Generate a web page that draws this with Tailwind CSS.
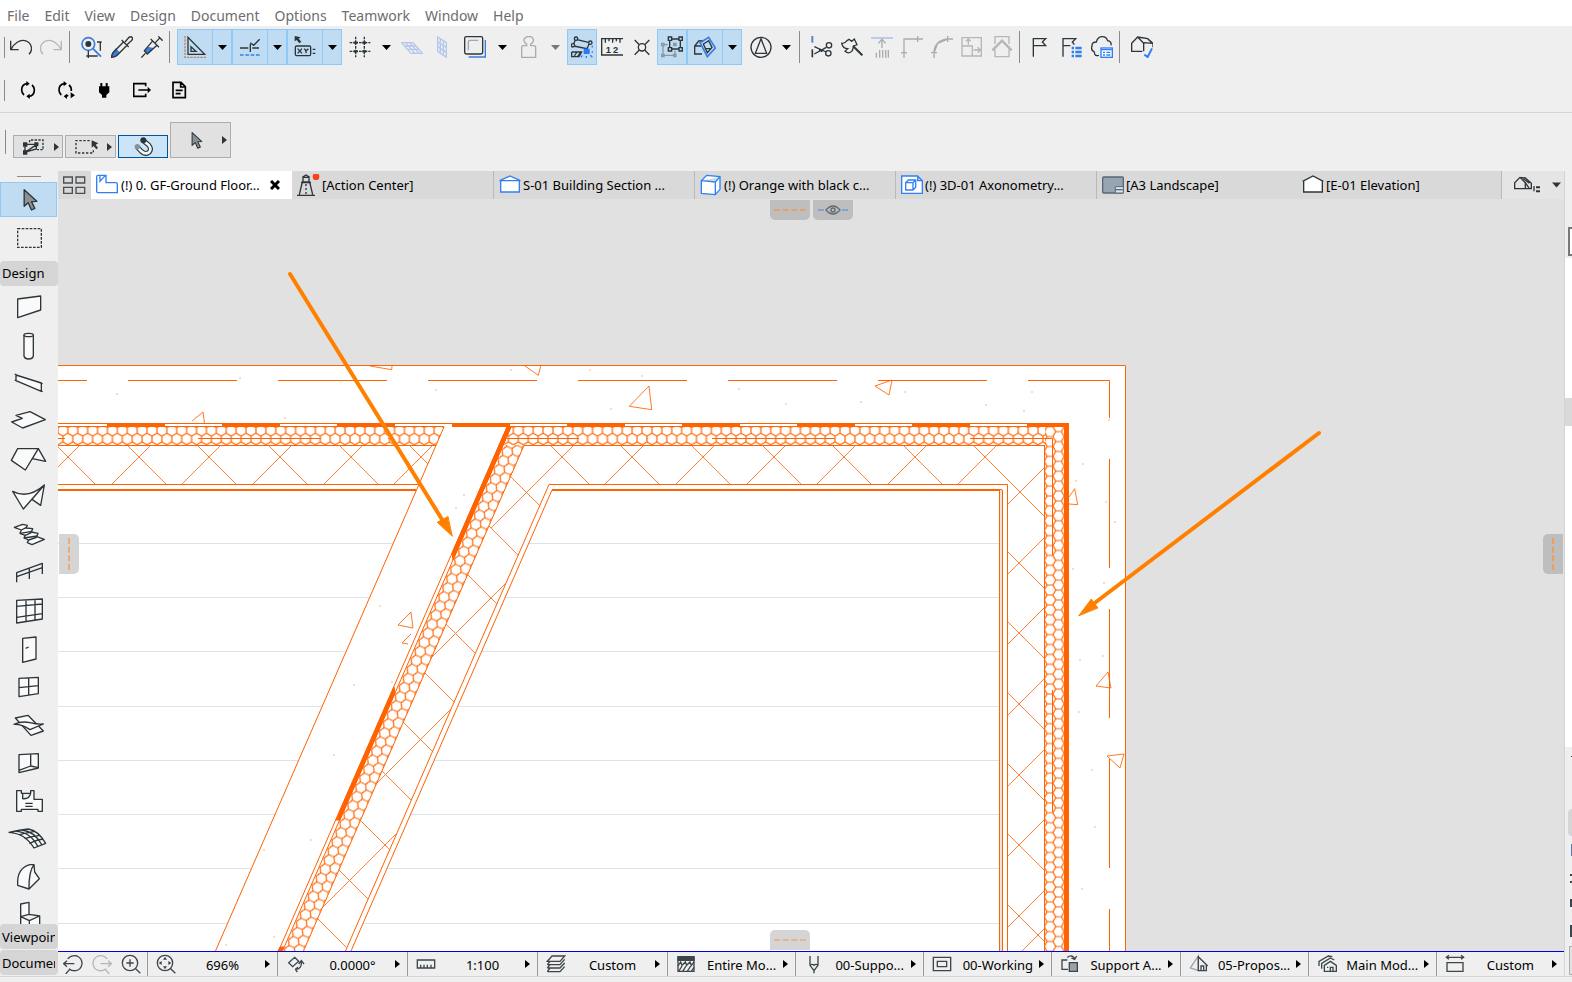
<!DOCTYPE html>
<html lang="en">
<head>
    <meta charset="UTF-8">
    <meta name="viewport" content="width=device-width, initial-scale=1.0">
    <title>GF-Ground Floor</title>
    <script src="https://cdn.jsdelivr.net/npm/@tailwindcss/browser@4"></script>
</head>
<body class="h-screen flex flex-col overflow-hidden bg-[#efefef] text-[13px] text-black font-['Noto_Sans','Open_Sans',sans-serif]">
    <!-- shared shapes -->
    <svg class="hidden">
        <symbol id="caret" viewBox="0 0 9 5"><path d="M0 0h9L4.5 5z" fill="currentColor"/></symbol>
        <symbol id="play" viewBox="0 0 5 8"><path d="M0 0l5 4-5 4z" fill="currentColor"/></symbol>
        <symbol id="pointer" viewBox="0 0 42 66"><path d="M2 2V52L14 41L24 63L34 58L24 38L40 37Z" fill="#8c9194" stroke="#2c3539" stroke-width="4" stroke-linejoin="round"/></symbol>
    </svg>

    <!-- menu bar -->
    <nav class="h-[26px] shrink-0 flex items-center gap-[15px] bg-white px-[7px] pt-[6px] text-sm text-[#6d6d6d]">
        <button>File</button>
        <button>Edit</button>
        <button>View</button>
        <button>Design</button>
        <button>Document</button>
        <button>Options</button>
        <button>Teamwork</button>
        <button>Window</button>
        <button>Help</button>
    </nav>

    <!-- standard toolbar -->
    <div class="h-[42px] shrink-0 flex items-center overflow-hidden [&_svg]:shrink-0 [&>button]:w-[30px] [&>button]:h-9 [&>button]:shrink-0 [&>button]:flex [&>button]:items-center [&>button]:justify-center">
        <span class="w-px h-[21px] ml-1 mr-px bg-[#8a8a8a] shrink-0"></span>
        <button aria-label="Undo"><svg class="size-[22px]" viewBox="0 0 66 66" fill="none" stroke="#2c3539" stroke-width="4"><path d="M2 14V41H26M3 40C12 22 30 10 45 14C66 20 70 42 57 55"/></svg></button>
        <button aria-label="Redo"><svg class="size-[22px]" viewBox="0 0 66 66" fill="none" stroke="#b4b6b7" stroke-width="4"><path d="M64 14V41H40M63 40C54 22 36 10 21 14C0 20-4 42 9 55"/></svg></button>
        <span class="w-px h-8 ml-[3px] mr-[7px] bg-[#8a8a8a] shrink-0"></span>
        <button aria-label="Find and select"><svg class="size-[22px]" viewBox="0 0 66 66" fill="none"><circle cx="22" cy="24" r="19" stroke="#3b7ddd" stroke-width="5"/><path d="M36 38L60 62" stroke="#3b7ddd" stroke-width="6"/><circle cx="22" cy="24" r="9" fill="#2c3539"/><path d="M22 44V66M16 60H50M48 18H62M58 18V44" stroke="#2c3539" stroke-width="4"/></svg></button>
        <button aria-label="Pick up parameters"><svg class="size-[22px]" viewBox="0 0 66 66" fill="none"><path d="M14 37L1 56V64H9L28 50Z" fill="#3b7ddd"/><path d="M38 17L6 50Q1 60 2 64Q10 64 17 59L48 28M32 12L53 33M42 18L54 4Q60 0 64 5Q66 10 61 14L48 26" stroke="#2c3539" stroke-width="4"/></svg></button>
        <button aria-label="Inject parameters"><svg class="size-[22px]" viewBox="0 0 66 66" fill="none"><path d="M20 32L10 46L18 54L30 46L38 36Z" fill="#3b7ddd"/><path d="M1 65L13 52M36 14L10 44L19 54L48 28M29 9L54 34M43 20L58 4M52 1L65 14" stroke="#2c3539" stroke-width="4"/></svg></button>
        <span class="w-px h-8 ml-[2px] mr-[7px] bg-[#8a8a8a] shrink-0"></span>

        <div class="flex shrink-0 h-9 *:border *:border-[#90c8f6] *:bg-[#c0dcf3] [&>button]:flex [&>button]:items-center [&>button]:justify-center">
            <button class="w-9" aria-label="Guide lines"><svg class="size-[22px]" viewBox="0 0 66 66" fill="none"><path d="M3 0V64H66" stroke="#c4825a" stroke-width="4" stroke-dasharray="7 3"/><path d="M12 4V55H62ZM21 32V46H36Z" stroke="#2c3539" stroke-width="4"/></svg></button>
            <button class="w-[19px] border-l-0!" aria-label="Guide line options"><svg class="w-[9px] h-[5px]"><use href="#caret"/></svg></button>
            <button class="w-9" aria-label="Snap guides"><svg class="size-[22px]" viewBox="0 0 66 66" fill="none"><path d="M3 36H28M34 24V48M40 36H60M34 20L44 28L62 10" stroke="#2c3539" stroke-width="4"/><path d="M3 57H62" stroke="#3b7ddd" stroke-width="5" stroke-dasharray="11 5"/></svg></button>
            <button class="w-[19px] border-l-0!" aria-label="Snap options"><svg class="w-[9px] h-[5px]"><use href="#caret"/></svg></button>
            <button class="w-9" aria-label="Coordinates"><svg class="size-[22px]" viewBox="0 0 66 66" fill="none" stroke="#2c3539" stroke-width="4"><path d="M2 0V16L8 12L16 22L22 17L14 8L20 4Z" fill="#2c3539" stroke="none"/><rect x="4" y="30" width="46" height="29" rx="4"/><path d="M11 38L24 52M24 38L11 52M31 38L36 45L43 38M36 45V52M56 40H64M56 52H64"/></svg></button>
            <button class="w-[19px] border-l-0!" aria-label="Coordinate options"><svg class="w-[9px] h-[5px]"><use href="#caret"/></svg></button>
        </div>
        <button class="ml-[3px]" aria-label="Grid"><svg class="size-[22px]" viewBox="0 0 66 66" fill="none" stroke="#2c3539" stroke-width="4"><path d="M20 2V64M46 2V64M2 20H64M2 46H64" stroke-dasharray="8 3 14 3"/><path d="M14 20H26M40 20H52M14 46H26M40 46H52" stroke-width="7"/></svg></button>
        <button class="w-[22px]!" aria-label="Grid options"><svg class="w-[9px] h-[5px]"><use href="#caret"/></svg></button>
        <button aria-label="Horizontal plane"><svg class="size-[22px]" viewBox="0 0 66 66" fill="none" stroke="#b3c7e8" stroke-width="4"><path d="M2 20H36L64 52H30ZM12 30H46M20 40H54M14 20L42 52M26 20L54 52"/></svg></button>
        <button aria-label="Vertical plane"><svg class="size-[22px]" viewBox="0 0 66 66" fill="none" stroke="#b3c7e8" stroke-width="4"><path d="M20 3L46 20V64L20 46ZM28 8V52M37 14V58M20 18L46 34M20 32L46 49"/></svg></button>
        <button class="ml-[3px]" aria-label="Floor"><svg class="size-[22px]" viewBox="0 0 66 66" fill="none"><path d="M14 63H64V12" stroke="#3b7ddd" stroke-width="4"/><rect x="2" y="2" width="54" height="52" rx="5" fill="#eee" stroke="#2c3539" stroke-width="4"/><path d="M13 43V18Q13 13 18 13H43" stroke="#a4a8aa" stroke-width="4"/></svg></button>
        <button class="w-[24px]!" aria-label="Floor options"><svg class="w-[9px] h-[5px]"><use href="#caret"/></svg></button>
        <button aria-label="Gravity"><svg class="size-[22px]" viewBox="0 0 66 66" fill="none" stroke="#a9acad" stroke-width="4"><path d="M11 64V34Q11 29 16 29H26V24Q16 18 18 10Q24 0 33 2Q42 0 46 10Q48 18 38 24V29H48Q53 29 53 34V64Z"/></svg></button>
        <button class="w-[23px]! text-[#777]" aria-label="Gravity options"><svg class="w-[9px] h-[5px]"><use href="#caret"/></svg></button>
        <button class="border border-[#90c8f6] bg-[#c0dcf3]" aria-label="Ruler snap"><svg class="size-[22px]" viewBox="0 0 66 66" fill="none" stroke="#2c3539" stroke-width="4"><path d="M6 28L14 10L56 20L48 38L8 30"/><circle cx="15" cy="8" r="5" fill="#c0dcf3"/><circle cx="6" cy="28" r="5" fill="#c0dcf3"/><circle cx="58" cy="20" r="5" fill="#c0dcf3"/><path d="M2 48H32L24 62H2V48M10 60L18 48M20 62L28 50"/><rect x="38" y="38" width="18" height="16" fill="#2979ff" stroke="none"/><path d="M62 34L66 30M62 48H66M58 58L64 64M46 60V66M34 58L30 64" stroke="#2979ff"/></svg></button>
        <button aria-label="Dimensions"><svg class="size-[22px]" viewBox="0 0 66 66" fill="none" stroke="#2c3539" stroke-width="4"><path d="M66 8H2V57H66M13 8V20M24 8V16M35 8V20M46 8V16M57 8V20"/><text x="14" y="51" fill="#2c3539" stroke="none" font-family="Liberation Sans" font-size="28" font-weight="bold">1</text><text x="36" y="51" fill="#2c3539" stroke="none" font-family="Liberation Sans" font-size="28" font-weight="bold">2</text></svg></button>
        <button aria-label="Snap points"><svg class="size-[22px]" viewBox="0 0 66 66" fill="none" stroke="#2c3539" stroke-width="4"><circle cx="33" cy="34" r="11"/><path d="M11 12L25 26M55 12L41 26M11 56L25 42M55 56L41 42"/></svg></button>
        <button class="border border-[#90c8f6] bg-[#c0dcf3]" aria-label="Group"><svg class="size-[22px]" viewBox="0 0 66 66" fill="none" stroke="#8998a3" stroke-width="4"><path d="M6 26H20M6 26V58H42V44M36 26H46"/><path d="M2 22h7v7H2zM2 55h7v7H2zM38 55h7v7h-7zM38 22h7v7h-7z"/><g stroke="#2c3539"><path d="M27 9H57M27 39H57M26 10V38M58 10V38"/><path d="M22 3h10v10H22zM54 3h10v10H54zM22 35h10v10H22zM54 35h10v10H54z" fill="#c0dcf3"/></g></svg></button>
        <button class="w-9! border border-[#90c8f6] bg-[#c0dcf3]" aria-label="Trace"><svg class="size-[22px]" viewBox="0 0 66 66" fill="none"><path d="M24 54H2V30L14 15L30 14M2 30H22" stroke="#2c3539" stroke-width="4"/><path d="M18 20L44 4L64 36L40 62Z" stroke="#3b7ddd" stroke-width="5"/><path d="M28 24L44 14L54 34L40 50ZM32 38H50" stroke="#2c3539" stroke-width="4"/></svg></button>
        <button class="w-[19px]! border border-l-0 border-[#90c8f6] bg-[#c0dcf3]" aria-label="Trace options"><svg class="w-[9px] h-[5px]"><use href="#caret"/></svg></button>
        <button class="ml-[4px]" aria-label="North"><svg class="size-[22px]" viewBox="0 0 66 66" fill="none" stroke="#2c3539" stroke-width="4"><circle cx="33" cy="34" r="30"/><path d="M33 8L16 52H50Z"/></svg></button>
        <button class="w-[21px]!" aria-label="North options"><svg class="w-[9px] h-[5px]"><use href="#caret"/></svg></button>
        <span class="w-px h-8 ml-[2px] mr-[7px] bg-[#8a8a8a] shrink-0"></span>

        <button aria-label="Split"><svg class="size-[22px]" viewBox="0 0 66 66" fill="none" stroke="#2c3539" stroke-width="4"><path d="M4 0V20" stroke="#5b86cf" stroke-width="6"/><path d="M4 40V64" stroke-width="5"/><path d="M10 32L46 48M10 54L46 34M24 40L34 47"/><circle cx="54" cy="28" r="8"/><circle cx="52" cy="52" r="8"/></svg></button>
        <button aria-label="Adjust"><svg class="size-[22px]" viewBox="0 0 66 66" fill="none" stroke="#2c3539" stroke-width="4"><path d="M18 14L24 10L32 16L40 9L48 26L38 30L34 44Q24 56 12 46L20 38Q6 38 2 22Q10 24 18 14Z"/><path d="M36 30L64 58" stroke-width="6"/></svg></button>
        <button aria-label="Trim"><svg class="size-[22px]" viewBox="0 0 66 66" fill="none" stroke="#a9acad" stroke-width="4"><path d="M0 6H66" stroke="#b0c4e6" stroke-width="5"/><path d="M33 36V12M22 22L33 10L44 22M16 50V65M26 42V65M35 42V65M44 42V65M52 42V65"/></svg></button>
        <button aria-label="Intersect"><svg class="size-[22px]" viewBox="0 0 66 66" fill="none" stroke="#a9acad" stroke-width="4"><path d="M0 50H18M9 66V9H66M50 0V18"/></svg></button>
        <button aria-label="Fillet"><svg class="size-[22px]" viewBox="0 0 66 66" fill="none" stroke="#a9acad" stroke-width="4"><path d="M0 50H18M9 66V50Q10 14 50 9H66M50 0V18M10 48L20 22L48 10"/></svg></button>
        <button aria-label="Resize"><svg class="size-[22px]" viewBox="0 0 66 66" fill="none" stroke="#b4b6b7" stroke-width="4"><path d="M3 5H61V60H3ZM3 30H34V60M22 26V8M15 16L22 9L29 16M38 42H58M50 34L58 42L50 50"/></svg></button>
        <button aria-label="Home story"><svg class="size-[22px]" viewBox="0 0 66 66" fill="none" stroke="#b4b6b7" stroke-width="4"><path d="M12 24V2H54V24M12 40V62H54V40"/><path d="M4 43L33 14L62 43" stroke-width="7"/></svg></button>
        <span class="w-px h-8 ml-[2px] mr-[7px] bg-[#8a8a8a] shrink-0"></span>
        <button aria-label="Flag"><svg class="size-[22px]" viewBox="0 0 66 66" fill="none" stroke="#2c3539" stroke-width="4"><path d="M7 62V8H44L34 18L44 29H8"/></svg></button>
        <button aria-label="Flag list"><svg class="size-[22px]" viewBox="0 0 66 66" fill="none" stroke="#2c3539" stroke-width="4"><path d="M6 62V8H44L34 18L40 26M6 29H28"/><path d="M32 36H39M43 36H62M32 48H39M43 48H62M32 60H39M43 60H62" stroke="#2f80f5" stroke-width="8"/></svg></button>
        <button aria-label="Cloud issues"><svg class="size-[22px]" viewBox="0 0 66 66" fill="none" stroke="#2c3539" stroke-width="4"><path d="M24 58Q10 62 10 48Q-2 42 3 30Q2 18 16 18Q20 2 34 2Q46 2 50 14Q62 16 60 28"/><rect x="30" y="36" width="34" height="28" fill="#fff" stroke="#2f80f5"/><path d="M30 41H64M36 49H42M46 49H58M36 57H42M46 57H58" stroke="#2f80f5"/></svg></button>
        <span class="w-px h-8 ml-[2px] mr-[7px] bg-[#8a8a8a] shrink-0"></span>
        <button aria-label="Check model"><svg class="size-[22px]" viewBox="0 0 66 66" fill="none" stroke="#2c3539" stroke-width="4"><path d="M34 46H2V22L20 3L38 22V46M20 3L50 8L66 22L38 20M66 22V34M50 8L64 22"/><path d="M40 56L50 63L63 37" stroke="#2f80f5" stroke-width="6"/></svg></button>
    </div>

    <!-- connections toolbar -->
    <div class="h-[45px] shrink-0 flex items-center border-b border-[#d4d4d4] [&>button]:w-[38px] [&>button]:h-8 [&>button]:flex [&>button]:items-center [&>button]:justify-center">
        <span class="w-px h-[21px] ml-1 mr-1 bg-[#8a8a8a]"></span>
        <button aria-label="Sync"><svg class="size-[18px]" viewBox="0 0 54 54" fill="none" stroke="#000" stroke-width="5"><path d="M24 8Q8 10 8 27Q8 36 15 42M30 46Q46 44 46 27Q46 18 39 12"/><path d="M22 0L32 8L22 16ZM32 38L22 46L32 54Z" fill="#000" stroke="none"/></svg></button>
        <button aria-label="Sync and play"><svg class="size-[18px]" viewBox="0 0 54 54" fill="none" stroke="#000" stroke-width="5"><path d="M22 8Q6 10 6 27Q6 36 13 42M28 46L34 43M43 30Q44 18 36 12"/><path d="M20 0L30 8L20 16ZM30 38L20 46L30 54ZM41 34L54 43L41 52Z" fill="#000" stroke="none"/></svg></button>
        <button aria-label="Plug"><svg class="size-[18px]" viewBox="0 0 54 54"><path d="M16 6H22V16H32V6H38V16H43V34L34 42V50H21V42L12 34V16H16Z"/></svg></button>
        <button aria-label="Export"><svg class="size-[18px]" viewBox="0 0 54 54" fill="none" stroke="#000" stroke-width="5"><path d="M38 16V8H2V46H38V38M16 27H48"/><path d="M44 17L54 27L44 37Z" fill="#000" stroke="none"/></svg></button>
        <button aria-label="Report"><svg class="size-[18px]" viewBox="0 0 54 54" fill="none" stroke="#000" stroke-width="5"><path d="M6 4H30L43 17V50H6ZM29 4V18H43M14 28H35M14 38H29"/></svg></button>
    </div>

    <!-- info box -->
    <div class="h-[58px] shrink-0 flex items-end gap-[2px] pb-[13px] [&>button]:flex [&>button]:items-center [&>button]:justify-between [&>button]:border [&>button]:border-[#adadad] [&>button]:bg-[#e1e1e1] [&>button]:pr-[3px] text-[#333]">
        <span class="w-px h-6 ml-[5px] mr-[5px] mb-1 bg-[#8a8a8a]"></span>
        <button class="w-[50px] h-[23px] pl-[9px]" aria-label="Selection method"><svg class="w-[21px] h-4" viewBox="0 0 63 48" fill="none" stroke="#2c3539" stroke-width="4"><path d="M20 10V3H60V32H42" stroke-dasharray="7 4"/><path d="M6 40V16H42L6 40M12 38L40 30V18"/><path d="M2 12h9v9H2zM2 36h9v9H2zM36 12h8v8h-8z" fill="#2c3539"/></svg><svg class="w-[5px] h-2"><use href="#play"/></svg></button>
        <button class="w-[51px] h-[23px] pl-[9px]" aria-label="Marquee method"><svg class="w-6 h-4" viewBox="0 0 72 48" fill="none" stroke="#2c3539" stroke-width="4"><path d="M44 5H3V42H55V34" stroke-dasharray="7 5"/><path d="M50 4V26L56 21L64 31L69 27L62 17L70 13Z" fill="#2c3539" stroke="none"/></svg><svg class="w-[5px] h-2"><use href="#play"/></svg></button>
        <button class="w-[50px] h-[23px] justify-center! pl-[3px] border-[#005499]! bg-[#cce4f7]!" aria-label="Magnet"><svg class="size-[19px]" viewBox="0 0 57 57" fill="none" stroke="#2c3539"><path d="M28 11L44 24Q54 36 45 46Q34 54 22 43L9 29" stroke-width="15"/><path d="M28 11L44 24Q54 36 45 46Q34 54 22 43L9 29" stroke="#eef5fb" stroke-width="8"/><circle cx="10" cy="29" r="8" fill="#8c9194" stroke="none"/><circle cx="28" cy="10" r="9" fill="#2c3539" stroke="none"/></svg></button>
        <button class="w-[61px] h-9 pl-5" aria-label="Arrow tool"><svg class="w-3 h-[17px]"><use href="#pointer"/></svg><svg class="w-[5px] h-2"><use href="#play"/></svg></button>
    </div>

    <div class="flex-1 min-h-0 flex">
        <!-- tool palette -->
        <aside class="w-[58px] shrink-0 flex flex-col overflow-hidden">
            <span class="w-6 h-px mt-[5px] mb-[5px] ml-[17px] bg-[#8a8a8a] shrink-0"></span>
            <button class="w-[57px] h-[35px] shrink-0 flex items-center justify-center pl-1 border border-[#90c8f6] bg-[#c0dcf3]" aria-label="Arrow"><svg class="w-[15px] h-[22px]"><use href="#pointer"/></svg></button>
            <button class="h-[42px] mb-[2px] shrink-0 flex items-center justify-center" aria-label="Marquee"><svg class="w-[25px] h-5" viewBox="0 0 75 60" fill="none" stroke="#2c3539" stroke-width="4"><path d="M2 2H73V58H2Z" stroke-dasharray="8 4"/></svg></button>
            <button class="h-[25px] mb-[2px] shrink-0 rounded-sm bg-[#d5d5d5] pl-[2px] pt-px text-left">Design</button>
            <div class="flex-1 min-h-0 overflow-hidden flex flex-col [&>button]:shrink-0 [&_svg]:size-[38px] [&_svg]:ml-[10px] [&_svg]:overflow-visible [&_svg]:fill-[#fafafa] [&_svg]:stroke-[#2c3539] [&_svg]:stroke-[4] [&_svg]:[stroke-linejoin:round]">
                <button aria-label="Wall"><svg viewBox="0 0 114 114"><path d="M23 33L92 24V66L23 89Z"/></svg></button>
                <button aria-label="Column"><svg viewBox="0 0 114 114"><path d="M42 27V90Q44 99 56 99Q68 99 70 90V27"/><ellipse cx="56" cy="27" rx="14" ry="5"/></svg></button>
                <button aria-label="Beam"><svg viewBox="0 0 114 114"><path d="M18 33L94 57V82L18 50ZM14 30L24 35M14 48L24 53M88 56L98 59M88 79L98 83"/></svg></button>
                <button aria-label="Slab"><svg viewBox="0 0 114 114"><path d="M5 60L37 49L18 40L60 29L106 53L38 78Z"/></svg></button>
                <button aria-label="Roof"><svg viewBox="0 0 114 114"><path d="M85 26L107 64L67 56ZM23 26H85L46 90L4 61Z"/></svg></button>
                <button aria-label="Shell"><svg viewBox="0 0 114 114"><path d="M103 21L92 82L66 64ZM8 40Q55 64 103 21L40 93Z"/></svg></button>
                <button aria-label="Stair"><svg viewBox="0 0 114 114"><path d="M13 34L38 25L52 28L48 36L68 38L64 48L84 52L80 62L103 70L66 86L52 80L56 72L42 66L46 58L30 52L34 42Z"/><path d="M34 42L50 34M30 52L66 46M46 58L64 50M42 66L82 60M56 72L80 64" class="fill-none"/></svg></button>
                <button aria-label="Railing"><svg viewBox="0 0 114 114"><path d="M20 85V56L97 28V60M20 68L97 41M58 42V75" class="fill-none"/></svg></button>
                <button aria-label="Curtain wall"><svg viewBox="0 0 114 114"><path d="M20 25L97 21V81L20 93ZM48 24V88M75 23V84M20 43L97 36M20 76L97 65"/></svg></button>
                <button aria-label="Door"><svg viewBox="0 0 114 114"><path d="M38 25L78 21V87L38 97ZM47 55L56 51"/></svg></button>
                <button aria-label="Window"><svg viewBox="0 0 114 114"><path d="M27 31L85 28V77L27 86ZM27 59L85 53M56 29V82"/></svg></button>
                <button aria-label="Skylight"><svg viewBox="0 0 114 114"><path d="M16 36L54 28L100 75L63 88Z"/><path d="M12 55Q36 44 60 50T100 54L60 71Q36 54 12 55Z"/></svg></button>
                <button aria-label="Opening"><svg viewBox="0 0 114 114"><path d="M27 32L85 29V72L27 86ZM62 31V66L27 79M62 66L85 71"/></svg></button>
                <button aria-label="Zone"><svg viewBox="0 0 114 114"><path d="M20 26H34V34H62V26H72V52H97V88H84V82H34V88H20ZM38 34V50Q58 52 62 34M46 64H68M46 73H68"/></svg></button>
                <button aria-label="Mesh"><svg viewBox="0 0 114 114"><path d="M-3 37Q30 30 55 27Q85 32 107 70L72 84Q46 40-3 37Z"/><path d="M16 34Q60 34 84 80M36 30Q74 34 96 75M28 44Q52 38 74 34M44 56Q66 48 90 46M58 70Q80 60 99 57" class="fill-none"/></svg></button>
                <button aria-label="Morph"><svg viewBox="0 0 114 114"><path d="M23 82Q20 30 60 20H72L74 42L88 62L57 93ZM72 20Q56 40 57 93"/></svg></button>
                <button aria-label="Object"><svg viewBox="0 0 114 114"><path d="M32 90V24L57 19V55L89 60V90M32 62L57 55M32 62L58 74L89 60M58 74V90"/></svg></button>
            </div>
            <button class="h-[25px] mb-px shrink-0 overflow-hidden rounded-sm bg-[#d5d5d5] pl-[2px] pr-[3px] pt-[2px] text-left"><span class="block overflow-hidden">Viewpoint</span></button>
            <button class="h-[25px] mb-px shrink-0 overflow-hidden rounded-sm bg-[#d5d5d5] pl-[2px] pr-[3px] pt-[2px] text-left"><span class="block overflow-hidden">Document</span></button>
        </aside>

        <main class="flex-1 min-w-0 flex flex-col">
            <!-- view tabs -->
            <div role="tablist" class="h-7 shrink-0 flex bg-[#d9d9d9] [&_svg]:shrink-0 [&>div]:w-[201px] [&>div]:min-w-0 [&>div]:flex [&>div]:items-center [&>div]:pl-[5px] [&>div]:gap-[2px] [&>div]:border-l [&>div]:border-[#b9b9b9] [&_button]:whitespace-nowrap [&_[role=tab]]:pt-[2px]">
                <button class="w-[33px] shrink-0 flex items-center justify-center" aria-label="Tab overview"><svg class="w-[23px] h-[19px]" viewBox="0 0 69 57" fill="none" stroke="#4a4f52" stroke-width="4"><path d="M2 3H28V21H2ZM39 3H65V21H39ZM2 34H28V52H2ZM39 34H65V52H39Z"/></svg></button>
                <div class="bg-white border-l-0! gap-[3px]!">
                    <svg class="size-[22px]" viewBox="0 0 66 66" fill="#fff" stroke="#2f80f5" stroke-width="4"><path d="M2 8Q2 4 6 4H30V26H60Q64 26 64 30V56H6Q2 56 2 52ZM12 4V22L28 4"/></svg>
                    <button role="tab" aria-selected="true">(!) 0. GF-Ground Floor...</button>
                    <button class="pl-[7px]" aria-label="Close tab"><svg class="size-[10px]" viewBox="0 0 10 10" stroke="#000" stroke-width="3"><path d="M1 1L9 9M9 1L1 9"/></svg></button>
                </div>
                <div class="border-l-0!">
                    <svg class="w-[23px] h-[22px]" viewBox="0 0 69 66" fill="none" stroke="#2c3539" stroke-width="4"><path d="M0 64H54M7 62L16 24H38L47 62M18 24V10H36V24M12 26H42M16 10L27 3L38 10M27 30V36M27 42V48M27 54V60"/><circle cx="57" cy="8" r="10" fill="#fa3f1a" stroke="none"/></svg>
                    <button role="tab">[Action Center]</button>
                </div>
                <div>
                    <svg class="size-[22px]" viewBox="0 0 66 66" fill="#fff" stroke="#2f80f5" stroke-width="4"><path d="M5 20V54H61V20M2 20L33 6L64 20Z"/></svg>
                    <button role="tab">S-01 Building Section ...</button>
                </div>
                <div>
                    <svg class="size-[22px]" viewBox="0 0 66 66" fill="#fff" stroke="#2f80f5" stroke-width="4"><path d="M4 20L20 4L60 8V46L46 62L4 58ZM4 20L46 24L60 8M46 24V62"/></svg>
                    <button role="tab">(!) Orange with black c...</button>
                </div>
                <div>
                    <svg class="size-[22px]" viewBox="0 0 66 66" fill="#fff" stroke="#2f80f5" stroke-width="4"><path d="M2 6H50L64 20V58H2ZM50 6V20H64"/><path d="M14 26L22 18H44V40L36 48H14ZM14 26H36L44 18M36 26V48"/></svg>
                    <button role="tab">(!) 3D-01 Axonometry...</button>
                </div>
                <div>
                    <svg class="size-[22px]" viewBox="0 0 66 66" fill="#97a5b3" stroke="#56687a" stroke-width="4"><rect x="2" y="9" width="62" height="48" rx="3"/><path d="M40 38H64V57H40Z" fill="#dfe5ec" stroke-width="3"/><path d="M42 47H62"/></svg>
                    <button role="tab">[A3 Landscape]</button>
                </div>
                <div class="border-l-0! flex-1">
                    <svg class="size-[22px]" viewBox="0 0 66 66" fill="#fff" stroke="#2c3539" stroke-width="4"><path d="M5 22V54H61V22M2 22L33 6L64 22"/></svg>
                    <button role="tab">[E-01 Elevation]</button>
                </div>
                <button class="w-[63px] shrink-0 flex items-center gap-3 border-l border-[#b9b9b9] bg-[#e5e5e5] pl-3 text-[#333]" aria-label="View settings"><svg class="w-[26px] h-[18px]" viewBox="0 0 78 54" fill="none" stroke="#2c3539" stroke-width="4"><path d="M2 38V20L18 4L34 20V38ZM18 4L34 6L52 22V38H34M28 8L46 22M34 20L46 38M60 30V46"/><path d="M66 34H78M66 46H78" stroke-width="6"/></svg><svg class="w-[9px] h-[6px]"><use href="#caret"/></svg></button>
            </div>

            <!-- drawing area -->
            <div class="relative flex-1 min-h-0 bg-[#e1e1e1] overflow-hidden">
                <svg class="absolute inset-0 w-full h-full" viewBox="58 199 1506 752" preserveAspectRatio="xMinYMin slice" fill="none" stroke="#ff6200">
                    <defs>
                        <!-- honeycomb insulation, one pattern per wall direction -->
                        <pattern id="combTop" x="944" y="427.6" width="9.9" height="17.1" patternUnits="userSpaceOnUse"><path d="M4.95 0V5.7L0 8.55V14.25L4.95 17.1L9.9 14.25V8.55L4.95 5.7" stroke="#ff6200" stroke-width="1.2" fill="none"/></pattern>
                        <pattern id="combSide" x="1044.3" y="426.7" width="17.1" height="9.9" patternUnits="userSpaceOnUse"><path d="M0 4.95L2.85 0H8.55L11.4 4.95L8.55 9.9H2.85ZM11.4 4.95H17.1" stroke="#ff6200" stroke-width="1.2" fill="none"/></pattern>
                        <pattern id="combSlant" width="17.1" height="9.9" patternUnits="userSpaceOnUse" patternTransform="translate(512 427) rotate(23.55)"><path d="M0 4.95L2.85 0H8.55L11.4 4.95L8.55 9.9H2.85ZM11.4 4.95H17.1" stroke="#ff6200" stroke-width="1.2" fill="none"/></pattern>
                        <clipPath id="leftWall"><path d="M58 427H444L419 484H58Z"/></clipPath>
                        <clipPath id="slantStud"><path d="M524 445H566L549 484L345 951H303Z"/></clipPath>
                        <clipPath id="floor"><path d="M58 490H416L215 951H58ZM552 490H999V951H351Z"/></clipPath>
                    </defs>
                    <path d="M58 365H1126V951H58Z" fill="#fff" stroke="none"/>
                    <path d="M58 365.5H1125.5V951"/>
                    <path d="M58 543.5H999M58 597.5H999M58 651.5H999M58 706.5H999M58 760.5H999M58 814.5H999M58 868.5H999M58 923.5H999" stroke="#dde2ef" clip-path="url(#floor)"/>

                    <!-- concrete layer -->
                    <path d="M58 380.5H87M128 380.5H237M278 380.5H387M428 380.5H537M578 380.5H687M728 380.5H837M878 380.5H987M1028 380.5H1109.5V418M1109.5 459V568M1109.5 609V718M1109.5 759V868M1109.5 909V951"/>
                    <path opacity=".85" d="M370 366L391.7 369.7L392 366M525 366L538.3 375.3L540.7 366M629.3 406.3L649 386L651.7 409.7ZM875 386L892 380L889 395ZM192 421L203 412L204.5 423M1069 497L1074.7 488.7L1077.7 504.7L1069 504M1096 686L1108 672L1111 688ZM1107 756L1124 754L1120 768ZM398 625L411 612L413 628ZM411 634L402 643L408 644"/>
                    <path stroke-width="1.5" stroke-linecap="round" opacity=".6" d="M117 394h0M240 378h0M285 418h0M511 370h0M590 370h0M642 376h0M436 390h0M611 409h0M739 389h0M786 404h0M861 402h0M905 392h0M986 405h0M1032 392h0M1024 411h0M1109 420h0M1083 464h0M1076 481h0M1106 502h0M1115 522h0M1073 569h0M1104 583h0M1080 660h0M1103 656h0M1079 712h0M1092 770h0M1095 827h0M464 495h0M456 508h0M354 685h0M392 682h0M380 606h0M334 755h0M264 850h0M311 840h0M312 884h0M274 937h0M226 945h0M1082 889h0"/>

                    <!-- membrane -->
                    <path d="M58 423.5H1069M58 426.5H444M510 426.5H1064"/>
                    <path stroke-width="4" d="M107 425H165M222 425H280M337 425H395M452 425H510M567 425H625M682 425H740M797 425H855M912 425H970M1027 425H1069"/>
                    <path stroke-width="5" d="M1066.5 423V951"/>
                    <path d="M507 427L278.5 951M511 427L282.5 951"/>
                    <path fill="#ff6200" d="M507 427H511L453 560L452 553ZM394 687L395 693L340 820L336 820ZM280 947H284L282 951H278Z"/>

                    <!-- top wall -->
                    <g clip-path="url(#leftWall)">
                        <path d="M58 427H450V445H58Z" fill="url(#combTop)" stroke="none"/>
                        <path d="M58 445.5H450M58 438.5H65M198 438.5H321M388 438.5H389"/>
                        <path opacity=".8" d="M56 445l39 39M80 445l-39 39M127 445l39 39M151 445l-39 39M197 445l39 39M221 445l-39 39M268 445l39 39M292 445l-39 39M339 445l39 39M363 445l-39 39M409 445l39 39M433 445l-39 39"/>
                    </g>
                    <path d="M58 484.5H419M444 427L215.5 951"/>
                    <path stroke-width="2" d="M58 490H416M552 490H1002"/>
                    <path d="M510 427H1046V445H504Z" fill="url(#combTop)" stroke="none"/>
                    <path d="M524 445.5H1045M507 438.5H579M646 438.5H647M712 438.5H835M970 438.5H1052.5V555M1052.5 690V812"/>
                    <path opacity=".8" d="M550 445l39 39M574 445L491 528M620 445l39 39M644 445l-39 39M691 445l39 39M715 445l-39 39M762 445l39 39M786 445l-39 39M832 445l39 39M856 445l-39 39M903 445l39 39M927 445l-39 39M973 445L1044 516M997 445l-39 39"/>

                    <!-- side wall -->
                    <path d="M1045 427H1064V951H1045Z" fill="url(#combSide)" stroke="none"/>
                    <path d="M1044.5 445V951M549 484.5H1007.5V951"/>
                    <path d="M999.5 490V952H1002.5V490" fill="#e3e3da"/>
                    <path opacity=".8" d="M1007 505L1044 468M1007 551L1044 588M1007 575L1044 538M1007 621L1044 658M1007 645L1044 608M1007 692L1044 729M1007 716L1044 679M1007 763L1044 800M1007 787L1044 750M1007 833L1044 870M1007 857L1044 820M1007 904L1044 941M1007 928L1044 891M1022 951L1044 929"/>

                    <!-- slanted wall -->
                    <path d="M503 445H524L303 951H282.5Z" fill="url(#combSlant)" stroke="none"/>
                    <path d="M524 445.5L303.5 951M549 484.5L345.5 951M552 490L351 951"/>
                    <g clip-path="url(#slantStud)" opacity=".8">
                        <path d="M500 466l120 120M470 507l120 120M440 547l120 120M410 588l120 120M380 628l120 120M360 679l120 120M330 719l120 120M300 760l120 120M280 811l120 120M260 861l120 120"/>
                        <path d="M539 550l-180 180M510 650l-180 180M430 800l-180 180"/>
                    </g>

                    <!-- callout arrows -->
                    <g stroke="#ff8000" stroke-width="4" stroke-linecap="round">
                        <path d="M290 274L443 521M1319 433L1094 603.5"/>
                        <path d="M452 536L437.3 522.3L447.7 516.7ZM1079 615.5L1091.3 599L1097.7 607.7Z" fill="#ff8000" stroke-width="1"/>
                    </g>
                </svg>

                <div class="absolute top-px inset-x-0 flex justify-center gap-[3px] [&>button]:w-10 [&>button]:h-5 [&>button]:rounded-b-[5px] [&>button]:bg-[#bebebe] [&>button]:flex [&>button]:items-center [&>button]:justify-center">
                    <button aria-label="Top edge"><span class="w-8 border-t-2 border-dashed border-[#e0a273]"></span></button>
                    <button aria-label="Toggle visibility"><svg class="w-[30px] h-3" viewBox="0 0 90 36" fill="none" stroke="#5f6b73" stroke-width="4"><path d="M0 18H18M72 18H90" stroke="#6f9be0"/><path d="M24 18Q45-6 66 18Q45 42 24 18Z"/><circle cx="45" cy="18" r="6"/></svg></button>
                </div>
                <div class="absolute bottom-px inset-x-0 flex justify-center gap-[3px]">
                    <button class="w-10 h-5 rounded-t-[5px] bg-[#d5d5d5] flex items-center justify-center" aria-label="Bottom edge"><span class="w-8 border-t-2 border-dashed border-[#e8b48c]"></span></button>
                    <span class="w-10"></span>
                </div>
                <div class="absolute left-px inset-y-0 flex flex-col justify-center gap-[3px]">
                    <button class="w-5 h-10 rounded-r-[5px] bg-[#d5d5d5] flex items-center justify-center" aria-label="Left edge"><span class="h-8 border-l-2 border-dashed border-[#e8ab7c]"></span></button>
                    <span class="h-10"></span>
                </div>
                <div class="absolute right-px inset-y-0 flex flex-col justify-center gap-[3px]">
                    <button class="w-5 h-10 rounded-l-[5px] bg-[#bebebe] flex items-center justify-center" aria-label="Right edge"><span class="h-8 border-l-2 border-dashed border-[#e8a060]"></span></button>
                    <span class="h-10"></span>
                </div>
            </div>

            <!-- quick options bar -->
            <footer class="h-[25px] shrink-0 flex border-t border-[#0000e0] [&>button]:flex-1 [&>button]:min-w-0 [&>button]:flex [&>button]:items-center [&>button]:border-l [&>button]:border-[#9a9a9a] [&>button]:pl-2 [&>button]:pr-[7px] [&>button>svg]:shrink-0 [&>button>span]:flex-1 [&>button>span]:text-center [&>button>span]:whitespace-nowrap [&>button>span]:pl-1 [&>button>span]:pt-[3px]">
                <div class="w-[89px] shrink-0 flex items-center gap-[9px] pl-[5px]">
                    <button aria-label="Previous zoom"><svg class="size-5" viewBox="0 0 60 60" fill="none" stroke="#3c464b" stroke-width="4"><path d="M14 14Q26 2 42 6Q58 14 57 30Q54 48 38 50Q26 51 18 44M8 60L20 46M2 29H34M12 20L2 29L12 38"/></svg></button>
                    <button aria-label="Next zoom"><svg class="size-5" viewBox="0 0 60 60" fill="none" stroke="#b4b6b7" stroke-width="4"><path d="M46 14Q34 2 18 6Q2 14 3 30Q6 48 22 50Q34 51 42 44M52 60L40 46M58 29H26M48 20L58 29L48 38"/></svg></button>
                    <button aria-label="Zoom in"><svg class="size-5" viewBox="0 0 60 60" fill="none" stroke="#3c464b" stroke-width="4"><circle cx="27" cy="27" r="23"/><path d="M44 44L58 58M16 27H38M27 16V38"/></svg></button>
                </div>
                <button class="flex-none! w-[130px]"><svg class="size-5" viewBox="0 0 60 60" fill="none" stroke="#3c464b" stroke-width="4"><circle cx="27" cy="27" r="23"/><path d="M44 44L58 58"/><path d="M27 8l6 9H21zM27 46l6-9H21zM8 27l9-6V33zM46 27l-9-6V33z" fill="#3c464b" stroke="none"/></svg><span>696%</span><svg class="w-[5px] h-2"><use href="#play"/></svg></button>
                <button class="flex-none! w-[130px]"><svg class="size-5" viewBox="0 0 60 60" fill="none" stroke="#3c464b" stroke-width="4"><path d="M8 26L26 10L38 22L20 38ZM28 46Q48 46 46 22M38 30L46 20L54 30M28 46L36 40M28 46L34 54"/></svg><span>0.0000°</span><svg class="w-[5px] h-2"><use href="#play"/></svg></button>
                <button class="flex-none! w-[130px]"><svg class="size-5" viewBox="0 0 60 60" fill="none" stroke="#3c464b" stroke-width="4"><path d="M4 18H56V42H4ZM14 42V32M24 42V32M34 42V32M45 42V32"/></svg><span>1:100</span><svg class="w-[5px] h-2"><use href="#play"/></svg></button>
                <button class="flex-none! w-[130px]"><svg class="size-5" viewBox="0 0 60 60" fill="none" stroke="#3c464b" stroke-width="4"><path d="M18 6H56L42 22H4ZM4 32H42L56 16M4 42H42L56 27M4 53H42L56 38M4 32L12 22M4 42L12 32M4 53L12 42"/></svg><span>Custom</span><svg class="w-[5px] h-2"><use href="#play"/></svg></button>
                <button><svg class="size-5" viewBox="0 0 60 60" fill="none" stroke="#3c464b" stroke-width="4"><path d="M6 8H54V52H6Z"/><path d="M6 10h48v9H6z" fill="#3c464b"/><path d="M6 36L14 24L18 34L28 24L32 34L42 24L46 34L54 24M8 52L18 36M20 52L30 36M34 52L44 36M46 52L54 40"/></svg><span>Entire Mo...</span><svg class="w-[5px] h-2"><use href="#play"/></svg></button>
                <button><svg class="size-5" viewBox="0 0 60 60" fill="none" stroke="#3c464b" stroke-width="4"><path d="M18 6V34L30 50L42 34V6M18 34Q24 28 30 34Q36 28 42 34M30 50V58"/></svg><span>00-Suppo...</span><svg class="w-[5px] h-2"><use href="#play"/></svg></button>
                <button><svg class="size-5" viewBox="0 0 60 60" fill="none" stroke="#3c464b" stroke-width="4"><path d="M4 10H56V50H4ZM16 22H44V38H16Z"/></svg><span>00-Working</span><svg class="w-[5px] h-2"><use href="#play"/></svg></button>
                <button><svg class="size-5" viewBox="0 0 60 60" fill="none" stroke="#3c464b" stroke-width="4"><path d="M24 46H6V18H22M22 10Q36 0 44 14M34 12L44 16L50 6"/><path d="M28 26H52V52H28Z" fill="#9aa2a8"/></svg><span>Support A...</span><svg class="w-[5px] h-2"><use href="#play"/></svg></button>
                <button><svg class="size-5" viewBox="0 0 60 60" fill="none" stroke="#3c464b" stroke-width="4"><path d="M28 6L4 42L28 50Z" stroke="#9aa2a8"/><path d="M28 6V50H52V30M28 8L56 36M36 50V36H44V50"/></svg><span>05-Propos...</span><svg class="w-[5px] h-2"><use href="#play"/></svg></button>
                <button><svg class="size-5" viewBox="0 0 60 60" fill="none" stroke="#3c464b" stroke-width="4"><path d="M22 52V34L40 22L58 34V52ZM14 44V28L40 12L52 18M6 36V22L34 6L46 8M40 52V40H48V52M30 40H34"/></svg><span>Main Mod...</span><svg class="w-[5px] h-2"><use href="#play"/></svg></button>
                <button><svg class="size-5" viewBox="0 0 60 60" fill="none" stroke="#3c464b" stroke-width="4"><path d="M4 10H56M12 4L4 10L12 16M48 4L56 10L48 16M6 26H54V52H6Z"/></svg><span>Custom</span><svg class="w-[5px] h-2"><use href="#play"/></svg></button>
            </footer>
        </main>

        <!-- docked navigator, collapsed to its edge -->
        <aside class="w-2 shrink-0 flex flex-col overflow-hidden border-l border-[#d4d4d4]">
            <div class="h-[56px] shrink-0"></div>
            <div class="h-[29px] shrink-0 ml-[3px] border-2 border-r-0 border-[#777] bg-white"></div>
            <div class="h-[2px] shrink-0"></div>
            <div class="flex-1 min-h-0 bg-white pt-[140px]"><div class="h-7 bg-[#d9d9d9]"></div></div>
            <div class="h-[229px] shrink-0 flex flex-col items-end pt-[9px]">
                <span class="w-px h-px bg-[#333]"></span>
                <span class="w-1 h-[27px] mt-[52px] rounded-l-sm bg-[#d5d5d5]"></span>
                <span class="w-px h-3 mt-2 bg-[#5b76b8]"></span>
                <span class="w-[2px] h-[9px] mt-[18px] border-y-2 border-[#3c464b]"></span>
                <span class="w-[2px] h-2 mt-4 border-2 border-r-0 border-[#3c464b]"></span>
                <span class="w-[2px] h-3 mt-[18px] border-2 border-r-0 border-[#3c464b]"></span>
                <span class="w-[3px] h-[29px] mt-[9px] border border-r-0 border-[#adadad] bg-[#e1e1e1]"></span>
            </div>
        </aside>
    </div>
    <div class="h-[6px] shrink-0 border-t border-[#d4d4d4]"></div>
</body>
</html>
